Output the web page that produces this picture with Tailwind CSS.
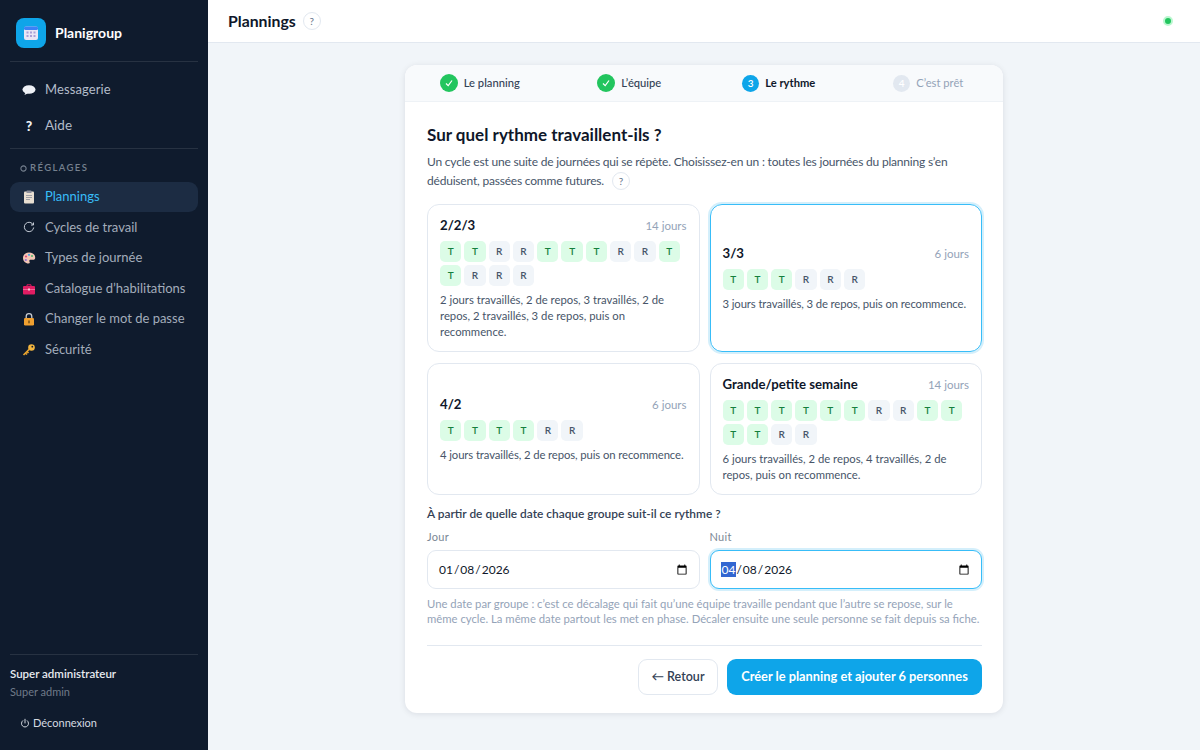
<!DOCTYPE html>
<html lang="fr">
<head>
  <meta charset="UTF-8">
  <meta name="viewport" content="width=device-width, initial-scale=1.0">
  <title>Planigroup</title>
  <script src="https://cdn.jsdelivr.net/npm/@tailwindcss/browser@4"></script>
</head>
<body class="flex h-screen overflow-hidden bg-[#f1f5f9] font-[family-name:Lato,sans-serif] text-[#0f172a]">
  <!-- Sidebar -->
  <aside class="flex h-[750px] w-[208px] shrink-0 flex-col bg-[#0f1b2d] px-[10px]">
    <div class="flex h-[62px] items-center gap-[9px] border-b border-white/10 pl-[6px] pt-[4px]">
      <div class="flex h-[30px] w-[30px] items-center justify-center rounded-[8px] bg-[#0ea5e9]">
        <svg class="h-[16px] w-[16px]" viewBox="0 0 16 16"><rect x="1" y="1.5" width="14" height="13.5" rx="2" fill="#e8e6f5"/><rect x="1" y="1.5" width="14" height="3.5" rx="1.5" fill="#3b82f6"/><g fill="#a9a0d8"><rect x="3.5" y="6.5" width="2" height="2"/><rect x="7" y="6.5" width="2" height="2"/><rect x="10.500" y="6.500" width="2" height="2"/><rect x="3.5" y="10" width="2" height="2"/><rect x="7" y="10" width="2" height="2"/><rect x="10.500" y="10" width="2" height="2"/></g></svg>
      </div>
      <span class="text-[14px] font-bold text-white">Planigroup</span>
    </div>
    <nav class="border-b border-white/10 pb-[5px] pt-[10px]">
      <a class="flex h-[36px] items-center gap-[9px] pl-[12px] text-[13px] tracking-[0.1px] text-[#b4bdca]">
        <svg class="h-[14px] w-[14px] shrink-0" viewBox="0 0 14 14"><ellipse cx="7" cy="6.500" rx="6.500" ry="4.300" fill="#eef1f6"/><path d="M3.500 9.500 2.500 12 6 10.300z" fill="#eef1f6"/></svg>
        <span>Messagerie</span>
      </a>
      <a class="flex h-[35px] items-center gap-[9px] pl-[12px] text-[13.5px] text-[#b4bdca]">
        <span class="w-[14px] shrink-0 text-center text-[14px] font-black text-[#eef1f6]">?</span>
        <span>Aide</span>
      </a>
    </nav>
    <div class="flex h-[34px] items-center gap-[3px] pl-[10px] pt-[5px] text-[9.5px] font-semibold tracking-[1.4px] text-[#76818f]">
      <svg class="h-[7px] w-[7px]" viewBox="0 0 8 8"><circle cx="4" cy="4" r="3" fill="none" stroke="#76818f" stroke-width="1.200"/></svg>
      <span>RÉGLAGES</span>
    </div>
    <nav class="-mt-[1px] flex flex-col gap-[1px]">
      <a class="flex h-[29.600px] items-center gap-[9px] rounded-[9px] bg-[#1c2c43] pl-[12px] text-[13px] text-[#38bdf8]">
        <svg class="h-[14px] w-[14px] shrink-0" viewBox="0 0 14 14"><rect x="2" y="1.500" width="10" height="12" rx="1" fill="#e9dfd2"/><rect x="4.500" y="0.500" width="5" height="2.500" rx="0.600" fill="#8d8f9c"/><path d="M4 5.500h6M4 7.500h6M4 9.500h4" stroke="#8d8f9c" stroke-width="0.800"/></svg>
        <span>Plannings</span>
      </a>
      <a class="flex h-[29.600px] items-center gap-[9px] pl-[12px] text-[13px] text-[#a3adbb]">
        <svg class="h-[14px] w-[14px] shrink-0" viewBox="0 0 14 14" fill="none" stroke="#c5ccd6" stroke-width="1"><path d="M11.300 5A4.700 4.700 0 1 0 11.700 7.500"/><path d="M11.500 2.500V5H9"/></svg>
        <span>Cycles de travail</span>
      </a>
      <a class="flex h-[29.600px] items-center gap-[9px] pl-[12px] text-[13px] text-[#a3adbb]">
        <svg class="h-[14px] w-[14px] shrink-0" viewBox="0 0 14 14"><path d="M7 1.500C3.500 1.500 1 4 1 7s2.500 5.500 5.500 5.500c1.500 0 1.500-1 1-1.800-.5-1 0-1.900 1.200-1.900H11c1.500 0 2.200-.9 2.200-2.300C13.200 3.500 10.500 1.500 7 1.500z" fill="#f3c6b4"/><circle cx="4" cy="5.500" r="1.100" fill="#e6497a"/><circle cx="7" cy="3.800" r="1.100" fill="#4aa3e8"/><circle cx="10" cy="5" r="1.100" fill="#55b96a"/><circle cx="3.800" cy="9" r="1.100" fill="#8f6bd8"/></svg>
        <span>Types de journée</span>
      </a>
      <a class="flex h-[29.600px] items-center gap-[9px] pl-[12px] text-[13px] text-[#a3adbb]">
        <svg class="h-[14px] w-[14px] shrink-0" viewBox="0 0 14 14"><path d="M5 4V2.800h4V4" fill="none" stroke="#e11d63" stroke-width="1"/><rect x="1" y="4" width="12" height="8.500" rx="1" fill="#e11d63"/><path d="M1 7.500h12" stroke="#f58bab" stroke-width="0.700"/><rect x="6" y="6.500" width="2" height="2" fill="#f9c5d5"/></svg>
        <span>Catalogue d’habilitations</span>
      </a>
      <a class="flex h-[29.600px] items-center gap-[9px] pl-[12px] text-[13px] text-[#a3adbb]">
        <svg class="h-[14px] w-[14px] shrink-0" viewBox="0 0 14 14"><path d="M4.200 6.500V4.500a2.800 2.800 0 0 1 5.600 0v2" fill="none" stroke="#c9cdd3" stroke-width="1.300"/><rect x="2" y="6" width="10" height="7.500" rx="1.200" fill="#f0a030"/><rect x="6.300" y="8.500" width="1.400" height="2.800" fill="#6b4a14"/></svg>
        <span>Changer le mot de passe</span>
      </a>
      <a class="flex h-[29.600px] items-center gap-[9px] pl-[12px] text-[13px] text-[#a3adbb]">
        <svg class="h-[14px] w-[14px] shrink-0" viewBox="0 0 14 14"><circle cx="9.500" cy="4.500" r="3.300" fill="#f3b63f"/><path d="M7.500 6 1.500 12M3.500 10l1.500 1.500M5 8.500 6.500 10" stroke="#e8a32e" stroke-width="1.700" fill="none"/><circle cx="10.300" cy="3.700" r="0.900" fill="#0f1b2d"/></svg>
        <span>Sécurité</span>
      </a>
    </nav>
    <div class="mt-auto border-t border-white/10 pb-[17px] pt-[10px]">
      <div class="text-[11.500px] font-semibold leading-[18px] text-[#e8ebf0]">Super administrateur</div>
      <div class="text-[11px] leading-[18px] text-[#6f7a89]">Super admin</div>
      <button class="mt-[12px] flex h-[20px] items-center gap-[3px] pl-[10px] text-[11px] text-[#d5dae1]">
        <svg class="h-[10px] w-[10px]" viewBox="0 0 24 24" fill="none" stroke="currentColor" stroke-width="2.400" stroke-linecap="round"><path d="M12 3v9"/><path d="M6.500 6.500a8.500 8.500 0 1 0 11 0"/></svg>
        <span>Déconnexion</span>
      </button>
    </div>
  </aside>

  <!-- Main -->
  <main class="flex min-w-0 flex-1 flex-col">
    <header class="flex h-[43px] shrink-0 items-center border-b border-[#e2e8f0] bg-white pl-[20px] pr-[27px]">
      <h1 class="text-[15.800px] font-bold">Plannings</h1>
      <span class="ml-[7px] flex h-[18px] w-[18px] items-center justify-center rounded-full border border-[#e2e8f0] text-[10px] text-[#64748b]">?</span>
      <span class="ml-auto h-[10px] w-[10px] rounded-full border-2 border-[#bbf7d0] bg-[#22c55e]"></span>
    </header>

    <div class="flex justify-center pt-[22px]">
      <section class="h-[648px] w-[598px] overflow-hidden rounded-[12px] bg-white shadow-[0_1px_6px_rgba(15,23,42,0.10)]">
        <!-- Steps -->
        <div class="grid h-[37px] grid-cols-4 items-center border-b border-[#eef2f6] bg-[#f8fafc] text-[11.200px]">
          <div class="flex items-center justify-center gap-[6px] font-medium text-[#334155]">
            <span class="flex h-[18px] w-[18px] items-center justify-center rounded-full bg-[#22c55e]"><svg class="h-[10px] w-[10px]" viewBox="0 0 10 10" fill="none" stroke="white" stroke-width="1.200"><path d="M2 5.500 4.200 7.700 8 2.500"/></svg></span>
            <span>Le planning</span>
          </div>
          <div class="flex items-center justify-center gap-[6px] font-medium text-[#334155]">
            <span class="flex h-[18px] w-[18px] items-center justify-center rounded-full bg-[#22c55e]"><svg class="h-[10px] w-[10px]" viewBox="0 0 10 10" fill="none" stroke="white" stroke-width="1.200"><path d="M2 5.500 4.200 7.700 8 2.500"/></svg></span>
            <span>L’équipe</span>
          </div>
          <div class="flex items-center justify-center gap-[6px] font-bold text-[#0f172a]">
            <span class="flex h-[17px] w-[17px] items-center justify-center rounded-full bg-[#0ea5e9] text-[10px] font-semibold text-white">3</span>
            <span>Le rythme</span>
          </div>
          <div class="flex items-center justify-center gap-[6px] text-[#94a3b8]">
            <span class="flex h-[17px] w-[17px] items-center justify-center rounded-full bg-[#e2e8f0] text-[10px] font-semibold text-white">4</span>
            <span>C’est prêt</span>
          </div>
        </div>

        <div class="pl-[22px] pr-[21px] pt-[21px]">
          <h2 class="text-[17px] font-bold leading-[24px]">Sur quel rythme travaillent-ils ?</h2>
          <p class="mt-[6px] h-[37px] text-[12px] leading-[18.500px] tracking-[-0.2px] text-[#475569]">
            Un cycle est une suite de journées qui se répète. Choisissez-en un : toutes les journées du planning s’en déduisent, passées comme futures.
            <span class="ml-[5px] inline-flex h-[18px] w-[18px] items-center justify-center rounded-full border border-[#e2e8f0] align-middle text-[10px] text-[#64748b]">?</span>
          </p>

          <!-- Rhythms -->
          <div class="mt-[14px] grid grid-cols-2 grid-rows-[148px_132px] gap-x-[10px] gap-y-[11px]">
            <div class="flex flex-col justify-center rounded-[12px] border border-[#e2e8f0] px-[12px]">
              <div class="flex items-center justify-between"><b class="text-[13.200px] text-[#0f172a]">2/2/3</b><span class="text-[11.500px] text-[#94a3b8]">14 jours</span></div>
              <div class="mt-[6px] flex flex-wrap gap-[3px] text-[10px] font-semibold">
                <span class="flex h-[21px] w-[21.300px] items-center justify-center rounded-[5px] bg-[#dcfce7] text-[#15803d]">T</span><span class="flex h-[21px] w-[21.300px] items-center justify-center rounded-[5px] bg-[#dcfce7] text-[#15803d]">T</span><span class="flex h-[21px] w-[21.300px] items-center justify-center rounded-[5px] bg-[#f1f5f9] text-[#475569]">R</span><span class="flex h-[21px] w-[21.300px] items-center justify-center rounded-[5px] bg-[#f1f5f9] text-[#475569]">R</span><span class="flex h-[21px] w-[21.300px] items-center justify-center rounded-[5px] bg-[#dcfce7] text-[#15803d]">T</span><span class="flex h-[21px] w-[21.300px] items-center justify-center rounded-[5px] bg-[#dcfce7] text-[#15803d]">T</span><span class="flex h-[21px] w-[21.300px] items-center justify-center rounded-[5px] bg-[#dcfce7] text-[#15803d]">T</span><span class="flex h-[21px] w-[21.300px] items-center justify-center rounded-[5px] bg-[#f1f5f9] text-[#475569]">R</span><span class="flex h-[21px] w-[21.300px] items-center justify-center rounded-[5px] bg-[#f1f5f9] text-[#475569]">R</span><span class="flex h-[21px] w-[21.300px] items-center justify-center rounded-[5px] bg-[#dcfce7] text-[#15803d]">T</span><span class="flex h-[21px] w-[21.300px] items-center justify-center rounded-[5px] bg-[#dcfce7] text-[#15803d]">T</span><span class="flex h-[21px] w-[21.300px] items-center justify-center rounded-[5px] bg-[#f1f5f9] text-[#475569]">R</span><span class="flex h-[21px] w-[21.300px] items-center justify-center rounded-[5px] bg-[#f1f5f9] text-[#475569]">R</span><span class="flex h-[21px] w-[21.300px] items-center justify-center rounded-[5px] bg-[#f1f5f9] text-[#475569]">R</span>
              </div>
              <p class="mt-[6px] text-[11.300px] leading-[16px] text-[#475569]">2 jours travaillés, 2 de repos, 3 travaillés, 2 de repos, 2 travaillés, 3 de repos, puis on recommence.</p>
            </div>

            <div class="flex flex-col justify-center rounded-[12px] border border-[#38bdf8] px-[12px] shadow-[0_0_0_2px_rgba(14,165,233,0.18)]">
              <div class="flex items-center justify-between"><b class="text-[13.200px] text-[#0f172a]">3/3</b><span class="text-[11.500px] text-[#94a3b8]">6 jours</span></div>
              <div class="mt-[6px] flex flex-wrap gap-[3px] text-[10px] font-semibold">
                <span class="flex h-[21px] w-[21.300px] items-center justify-center rounded-[5px] bg-[#dcfce7] text-[#15803d]">T</span><span class="flex h-[21px] w-[21.300px] items-center justify-center rounded-[5px] bg-[#dcfce7] text-[#15803d]">T</span><span class="flex h-[21px] w-[21.300px] items-center justify-center rounded-[5px] bg-[#dcfce7] text-[#15803d]">T</span><span class="flex h-[21px] w-[21.300px] items-center justify-center rounded-[5px] bg-[#f1f5f9] text-[#475569]">R</span><span class="flex h-[21px] w-[21.300px] items-center justify-center rounded-[5px] bg-[#f1f5f9] text-[#475569]">R</span><span class="flex h-[21px] w-[21.300px] items-center justify-center rounded-[5px] bg-[#f1f5f9] text-[#475569]">R</span>
              </div>
              <p class="mt-[6px] whitespace-nowrap text-[11.300px] leading-[16px] tracking-[-0.1px] text-[#475569]">3 jours travaillés, 3 de repos, puis on recommence.</p>
            </div>

            <div class="flex flex-col justify-center rounded-[12px] border border-[#e2e8f0] px-[12px]">
              <div class="flex items-center justify-between"><b class="text-[13.200px] text-[#0f172a]">4/2</b><span class="text-[11.500px] text-[#94a3b8]">6 jours</span></div>
              <div class="mt-[6px] flex flex-wrap gap-[3px] text-[10px] font-semibold">
                <span class="flex h-[21px] w-[21.300px] items-center justify-center rounded-[5px] bg-[#dcfce7] text-[#15803d]">T</span><span class="flex h-[21px] w-[21.300px] items-center justify-center rounded-[5px] bg-[#dcfce7] text-[#15803d]">T</span><span class="flex h-[21px] w-[21.300px] items-center justify-center rounded-[5px] bg-[#dcfce7] text-[#15803d]">T</span><span class="flex h-[21px] w-[21.300px] items-center justify-center rounded-[5px] bg-[#dcfce7] text-[#15803d]">T</span><span class="flex h-[21px] w-[21.300px] items-center justify-center rounded-[5px] bg-[#f1f5f9] text-[#475569]">R</span><span class="flex h-[21px] w-[21.300px] items-center justify-center rounded-[5px] bg-[#f1f5f9] text-[#475569]">R</span>
              </div>
              <p class="mt-[6px] whitespace-nowrap text-[11.300px] leading-[16px] tracking-[-0.1px] text-[#475569]">4 jours travaillés, 2 de repos, puis on recommence.</p>
            </div>

            <div class="flex flex-col justify-center rounded-[12px] border border-[#e2e8f0] px-[12px]">
              <div class="flex items-center justify-between"><b class="text-[13.200px] text-[#0f172a]">Grande/petite semaine</b><span class="text-[11.500px] text-[#94a3b8]">14 jours</span></div>
              <div class="mt-[6px] flex flex-wrap gap-[3px] text-[10px] font-semibold">
                <span class="flex h-[21px] w-[21.300px] items-center justify-center rounded-[5px] bg-[#dcfce7] text-[#15803d]">T</span><span class="flex h-[21px] w-[21.300px] items-center justify-center rounded-[5px] bg-[#dcfce7] text-[#15803d]">T</span><span class="flex h-[21px] w-[21.300px] items-center justify-center rounded-[5px] bg-[#dcfce7] text-[#15803d]">T</span><span class="flex h-[21px] w-[21.300px] items-center justify-center rounded-[5px] bg-[#dcfce7] text-[#15803d]">T</span><span class="flex h-[21px] w-[21.300px] items-center justify-center rounded-[5px] bg-[#dcfce7] text-[#15803d]">T</span><span class="flex h-[21px] w-[21.300px] items-center justify-center rounded-[5px] bg-[#dcfce7] text-[#15803d]">T</span><span class="flex h-[21px] w-[21.300px] items-center justify-center rounded-[5px] bg-[#f1f5f9] text-[#475569]">R</span><span class="flex h-[21px] w-[21.300px] items-center justify-center rounded-[5px] bg-[#f1f5f9] text-[#475569]">R</span><span class="flex h-[21px] w-[21.300px] items-center justify-center rounded-[5px] bg-[#dcfce7] text-[#15803d]">T</span><span class="flex h-[21px] w-[21.300px] items-center justify-center rounded-[5px] bg-[#dcfce7] text-[#15803d]">T</span><span class="flex h-[21px] w-[21.300px] items-center justify-center rounded-[5px] bg-[#dcfce7] text-[#15803d]">T</span><span class="flex h-[21px] w-[21.300px] items-center justify-center rounded-[5px] bg-[#dcfce7] text-[#15803d]">T</span><span class="flex h-[21px] w-[21.300px] items-center justify-center rounded-[5px] bg-[#f1f5f9] text-[#475569]">R</span><span class="flex h-[21px] w-[21.300px] items-center justify-center rounded-[5px] bg-[#f1f5f9] text-[#475569]">R</span>
              </div>
              <p class="mt-[6px] text-[11.300px] leading-[16px] text-[#475569]">6 jours travaillés, 2 de repos, 4 travaillés, 2 de repos, puis on recommence.</p>
            </div>
          </div>

          <!-- Dates -->
          <p class="mt-[11px] text-[11.900px] font-semibold leading-[16px] text-[#334155]">À partir de quelle date chaque groupe suit-il ce rythme ?</p>
          <div class="mt-[7px] grid grid-cols-2 gap-[10px]">
            <label class="block">
              <span class="block text-[11px] leading-[16px] tracking-[0.3px] text-[#7b8794]">Jour</span>
              <input type="date" value="2026-01-08" class="mt-[5px] h-[39px] w-full rounded-[9px] border border-[#e2e8f0] bg-white pl-[10px] pr-[9px] text-[12px] text-[#0f172a]">
            </label>
            <label class="block">
              <span class="block text-[11px] leading-[16px] tracking-[0.3px] text-[#7b8794]">Nuit</span>
              <input type="date" value="2026-04-08" autofocus class="mt-[5px] h-[39px] w-full rounded-[9px] border border-[#38bdf8] bg-white pl-[10px] pr-[9px] text-[12px] text-[#0f172a] shadow-[0_0_0_2px_rgba(14,165,233,0.18)] outline-none [&::-webkit-datetime-edit-month-field:focus]:bg-[#0b6bcb]">
            </label>
          </div>
          <p class="mt-[7px] text-[11.300px] leading-[15px] text-[#94a3b8]">Une date par groupe : c’est ce décalage qui fait qu’une équipe travaille pendant que l’autre se repose, sur le même cycle. La même date partout les met en phase. Décaler ensuite une seule personne se fait depuis sa fiche.</p>

          <div class="mt-[19px] flex justify-end gap-[9px] border-t border-[#e2e8f0] pt-[13px]">
            <button class="h-[36px] w-[80px] rounded-[9px] border border-[#e2e8f0] bg-white text-[12.500px] font-semibold text-[#334155]">← Retour</button>
            <button class="h-[36px] w-[255px] rounded-[9px] bg-[#0ea5e9] text-[12.800px] font-bold text-white">Créer le planning et ajouter 6 personnes</button>
          </div>
        </div>
      </section>
    </div>
  </main>
</body>
</html>
